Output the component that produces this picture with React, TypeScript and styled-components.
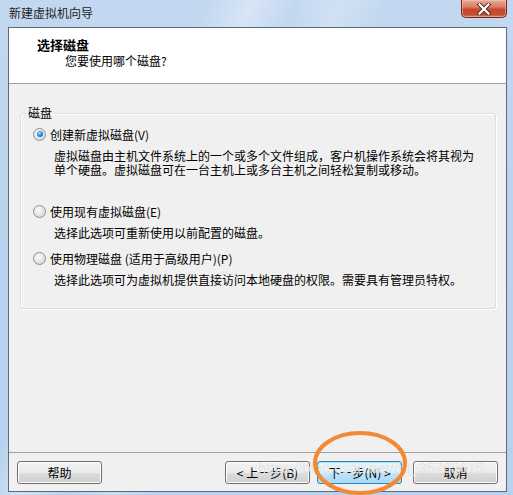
import styled, { createGlobalStyle } from "styled-components";

const GlobalStyle = createGlobalStyle`
  html, body {
    margin: 0;
    padding: 0;
    background: #ffffff;
  }
  body {
    font-family: "Noto Sans CJK SC", "Noto Sans", sans-serif;
    font-size: 12px;
    color: #000;
  }
`;

const Frame = styled.div`
  position: relative;
  width: 513px;
  height: 495px;
  box-sizing: border-box;
  padding: 0 6px 3px 8px;
  display: flex;
  flex-direction: column;
  overflow: hidden;
  background:
    linear-gradient(115deg, rgba(255, 255, 255, 0) 28%, rgba(255, 255, 255, 0.35) 34%, rgba(255, 255, 255, 0) 40%, rgba(255, 255, 255, 0.25) 46%, rgba(255, 255, 255, 0) 52%),
    linear-gradient(180deg, #c3d8f0 0%, #bcd3ee 40%, #b8d1ee 100%);
`;

const TitleBar = styled.div`
  height: 27px;
  display: flex;
  align-items: flex-start;
  justify-content: space-between;
`;

const Title = styled.div`
  margin-top: 5px;
  margin-left: 1px;
  line-height: 16px;
  color: #1e1e1e;
  font-size: 12px;
`;

const CloseButton = styled.div`
  width: 44px;
  height: 17px;
  margin-right: 0px;
  border: 1px solid #6b2b22;
  border-top: none;
  border-radius: 0 0 5px 5px;
  background: linear-gradient(180deg, #e9a897 0%, #dd7e68 40%, #c9452c 55%, #c44d33 85%, #d67a5f 100%);
  box-shadow: inset 0 0 0 1px rgba(255, 210, 190, 0.45);
  display: flex;
  align-items: center;
  justify-content: center;
`;

const Client = styled.div`
  flex: 1;
  display: flex;
  flex-direction: column;
  border: 1px solid #5b6b7d;
  background: #f0f0f0;
`;

const Header = styled.div`
  height: 56px;
  box-sizing: border-box;
  background: #ffffff;
  border-bottom: 1px solid #a0a0a0;
  padding: 8px 0 0 28px;
`;

const HeaderTitle = styled.div`
  font-weight: bold;
  font-size: 13px;
  line-height: 17px;
`;

const HeaderSub = styled.div`
  margin-top: 0px;
  margin-left: 28px;
  line-height: 16px;
`;

const Body = styled.div`
  flex: 1;
  padding: 22px 10px 0 11px;
`;

const GroupBox = styled.fieldset`
  margin: 0;
  padding: 0;
  min-width: 0;
  border: 1px solid #d5dfe5;
  border-radius: 3px;
  box-shadow: inset 1px 1px 0 #ffffff, 1px 1px 0 #ffffff;
`;

const Legend = styled.legend`
  margin-left: 5px;
  padding: 0 2px;
  line-height: 14px;
`;

const Options = styled.div`
  padding: 6px 12px 21px 12px;
`;

const Option = styled.div<{ $top: number }>`
  margin-top: ${(p) => p.$top}px;
`;

const RadioRow = styled.div`
  display: flex;
  align-items: center;
  gap: 4px;
  height: 16px;
`;

const Radio = styled.span<{ $checked?: boolean }>`
  position: relative;
  width: 11px;
  height: 11px;
  border-radius: 50%;
  border: 1px solid #8e8f8f;
  background: radial-gradient(circle at 40% 35%, #fbfbfb 0%, #e4e4e4 55%, #cfcfcf 100%);
  flex-shrink: 0;

  &::after {
    content: "";
    display: ${(p) => (p.$checked ? "block" : "none")};
    position: absolute;
    left: 2.5px;
    top: 2.5px;
    width: 6px;
    height: 6px;
    border-radius: 50%;
    background: radial-gradient(circle at 40% 35%, #aee6ff 0%, #2b8ee0 45%, #0f4f9e 100%);
  }
`;

const Desc = styled.div`
  margin: 7px 0 0 21px;
  line-height: 14px;
`;

const Footer = styled.div`
  height: 39px;
  box-sizing: border-box;
  border-top: 1px solid #a0a0a0;
  padding: 8px 8px 0 8px;
  display: flex;
  align-items: flex-start;
`;

const Button = styled.button<{ $default?: boolean; $gap?: number; $push?: boolean }>`
  width: 85px;
  height: 23px;
  margin: 0;
  margin-left: ${(p) => (p.$push ? "auto" : `${p.$gap ?? 0}px`)};
  padding: 0;
  box-sizing: border-box;
  font-family: "Noto Sans CJK SC", "Noto Sans", sans-serif;
  font-size: 12px;
  color: #000;
  border-radius: 3px;
  border: 1px solid ${(p) => (p.$default ? "#3c7fb1" : "#707070")};
  background: ${(p) =>
    p.$default
      ? "linear-gradient(180deg, #eaf6fd 0%, #d9f0fc 50%, #bee6fd 51%, #a7d9f5 100%)"
      : "linear-gradient(180deg, #f2f2f2 0%, #ebebeb 50%, #dddddd 51%, #cfcfcf 100%)"};
  box-shadow: inset 0 0 0 1px ${(p) => (p.$default ? "#9ee3fc" : "#fcfcfc")};
`;

const Annotation = styled.svg`
  position: absolute;
  left: 310px;
  top: 428px;
  pointer-events: none;
`;

const Watermark = styled.div`
  position: absolute;
  left: 258px;
  top: 460px;
  font-family: "Liberation Sans", Arial, sans-serif;
  font-size: 14.5px;
  letter-spacing: 0.1px;
  color: rgba(215, 215, 215, 0.7);
  text-shadow: 0 0 1px rgba(255, 255, 255, 0.9);
  pointer-events: none;
`;

export default function App() {
  return (
    <>
      <GlobalStyle />
      <Frame>
        <TitleBar>
          <Title>新建虚拟机向导</Title>
          <CloseButton>
            <svg width="16" height="12" viewBox="0 0 16 12">
              <path d="M3.5 1.5 L12.5 10.5 M12.5 1.5 L3.5 10.5" stroke="#4a2a26" strokeWidth="4" strokeLinecap="square" />
              <path d="M3.5 1.5 L12.5 10.5 M12.5 1.5 L3.5 10.5" stroke="#ffffff" strokeWidth="2.2" strokeLinecap="square" />
            </svg>
          </CloseButton>
        </TitleBar>
        <Client>
          <Header>
            <HeaderTitle>选择磁盘</HeaderTitle>
            <HeaderSub>您要使用哪个磁盘?</HeaderSub>
          </Header>
          <Body>
            <GroupBox>
              <Legend>磁盘</Legend>
              <Options>
                <Option $top={0}>
                  <RadioRow>
                    <Radio $checked />
                    <span>创建新虚拟磁盘(V)</span>
                  </RadioRow>
                  <Desc>
                    虚拟磁盘由主机文件系统上的一个或多个文件组成，客户机操作系统会将其视为
                    <br />
                    单个硬盘。虚拟磁盘可在一台主机上或多台主机之间轻松复制或移动。
                  </Desc>
                </Option>
                <Option $top={26}>
                  <RadioRow>
                    <Radio />
                    <span>使用现有虚拟磁盘(E)</span>
                  </RadioRow>
                  <Desc>选择此选项可重新使用以前配置的磁盘。</Desc>
                </Option>
                <Option $top={10}>
                  <RadioRow>
                    <Radio />
                    <span>使用物理磁盘 (适用于高级用户)(P)</span>
                  </RadioRow>
                  <Desc>选择此选项可为虚拟机提供直接访问本地硬盘的权限。需要具有管理员特权。</Desc>
                </Option>
              </Options>
            </GroupBox>
          </Body>
          <Footer>
            <Button>帮助</Button>
            <Button $push>&lt; 上一步(B)</Button>
            <Button $default $gap={7}>下一步(N) &gt;</Button>
            <Button $gap={11}>取消</Button>
          </Footer>
        </Client>
        <Watermark>https://blog.csdn.net/qq_35765615</Watermark>
        <Annotation width="100" height="70" viewBox="0 0 100 70">
          <ellipse cx="50" cy="35" rx="45" ry="30" fill="none" stroke="#f28a35" strokeWidth="4" />
        </Annotation>
      </Frame>
    </>
  );
}
